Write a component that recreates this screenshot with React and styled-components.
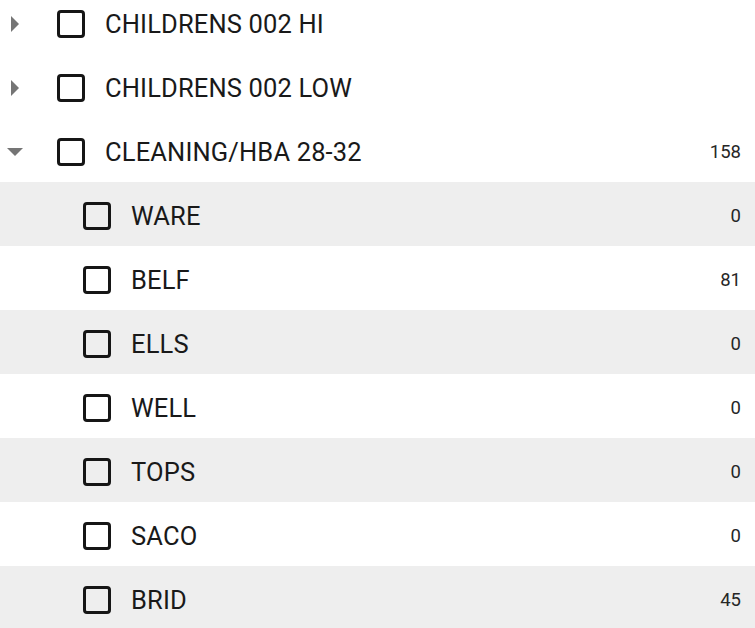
import React from "react";
import styled, { createGlobalStyle } from "styled-components";

const Global = createGlobalStyle`
  html, body { margin: 0; padding: 0; background: #fff; }
  body { font-family: Roboto, "Noto Sans", sans-serif; overflow: hidden; }
`;

const List = styled.div`
  display: flex;
  flex-direction: column;
  margin-top: -10px;
  width: 755px;
`;

const Row = styled.div`
  display: flex;
  align-items: center;
  height: 64px;
  box-sizing: border-box;
  padding-top: 3px;
  padding-left: ${(p) => p.$level * 26}px;
  background: ${(p) => (p.$shaded ? "#eeeeee" : "#ffffff")};
`;

const Toggle = styled.div`
  width: 57px;
  height: 100%;
  display: flex;
  align-items: center;
  justify-content: flex-start;
  padding-left: 7px;
  box-sizing: border-box;
`;

const Box = styled.div`
  width: 28px;
  height: 28px;
  box-sizing: border-box;
  border: 3px solid #161616;
  border-radius: 4px;
  flex: none;
`;

const Label = styled.span`
  margin-left: 20px;
  font-size: 25.5px;
  letter-spacing: 0.15px;
  color: #191919;
`;

const Count = styled.span`
  margin-left: auto;
  padding-right: 14px;
  font-size: 18.5px;
  color: #262626;
`;

const Arrow = ({ open }) =>
  open ? (
    <svg width="16" height="16" viewBox="0 0 16 16">
      <path d="M0 4 L16 4 L8 12 Z" fill="#757575" />
    </svg>
  ) : (
    <svg width="16" height="16" viewBox="0 0 16 16">
      <path d="M4 0 L12 8 L4 16 Z" fill="#757575" />
    </svg>
  );

const rows = [
  { label: "CHILDRENS 002 HI", level: 0, arrow: "closed" },
  { label: "CHILDRENS 002 LOW", level: 0, arrow: "closed" },
  { label: "CLEANING/HBA 28-32", level: 0, arrow: "open", count: 158 },
  { label: "WARE", level: 1, count: 0, shaded: true },
  { label: "BELF", level: 1, count: 81 },
  { label: "ELLS", level: 1, count: 0, shaded: true },
  { label: "WELL", level: 1, count: 0 },
  { label: "TOPS", level: 1, count: 0, shaded: true },
  { label: "SACO", level: 1, count: 0 },
  { label: "BRID", level: 1, count: 45, shaded: true },
];

export default function App() {
  return (
    <>
      <Global />
      <List>
        {rows.map((r) => (
          <Row key={r.label} $level={r.level} $shaded={r.shaded}>
            <Toggle>{r.arrow && <Arrow open={r.arrow === "open"} />}</Toggle>
            <Box />
            <Label>{r.label}</Label>
            {r.count !== undefined && <Count>{r.count}</Count>}
          </Row>
        ))}
      </List>
    </>
  );
}
